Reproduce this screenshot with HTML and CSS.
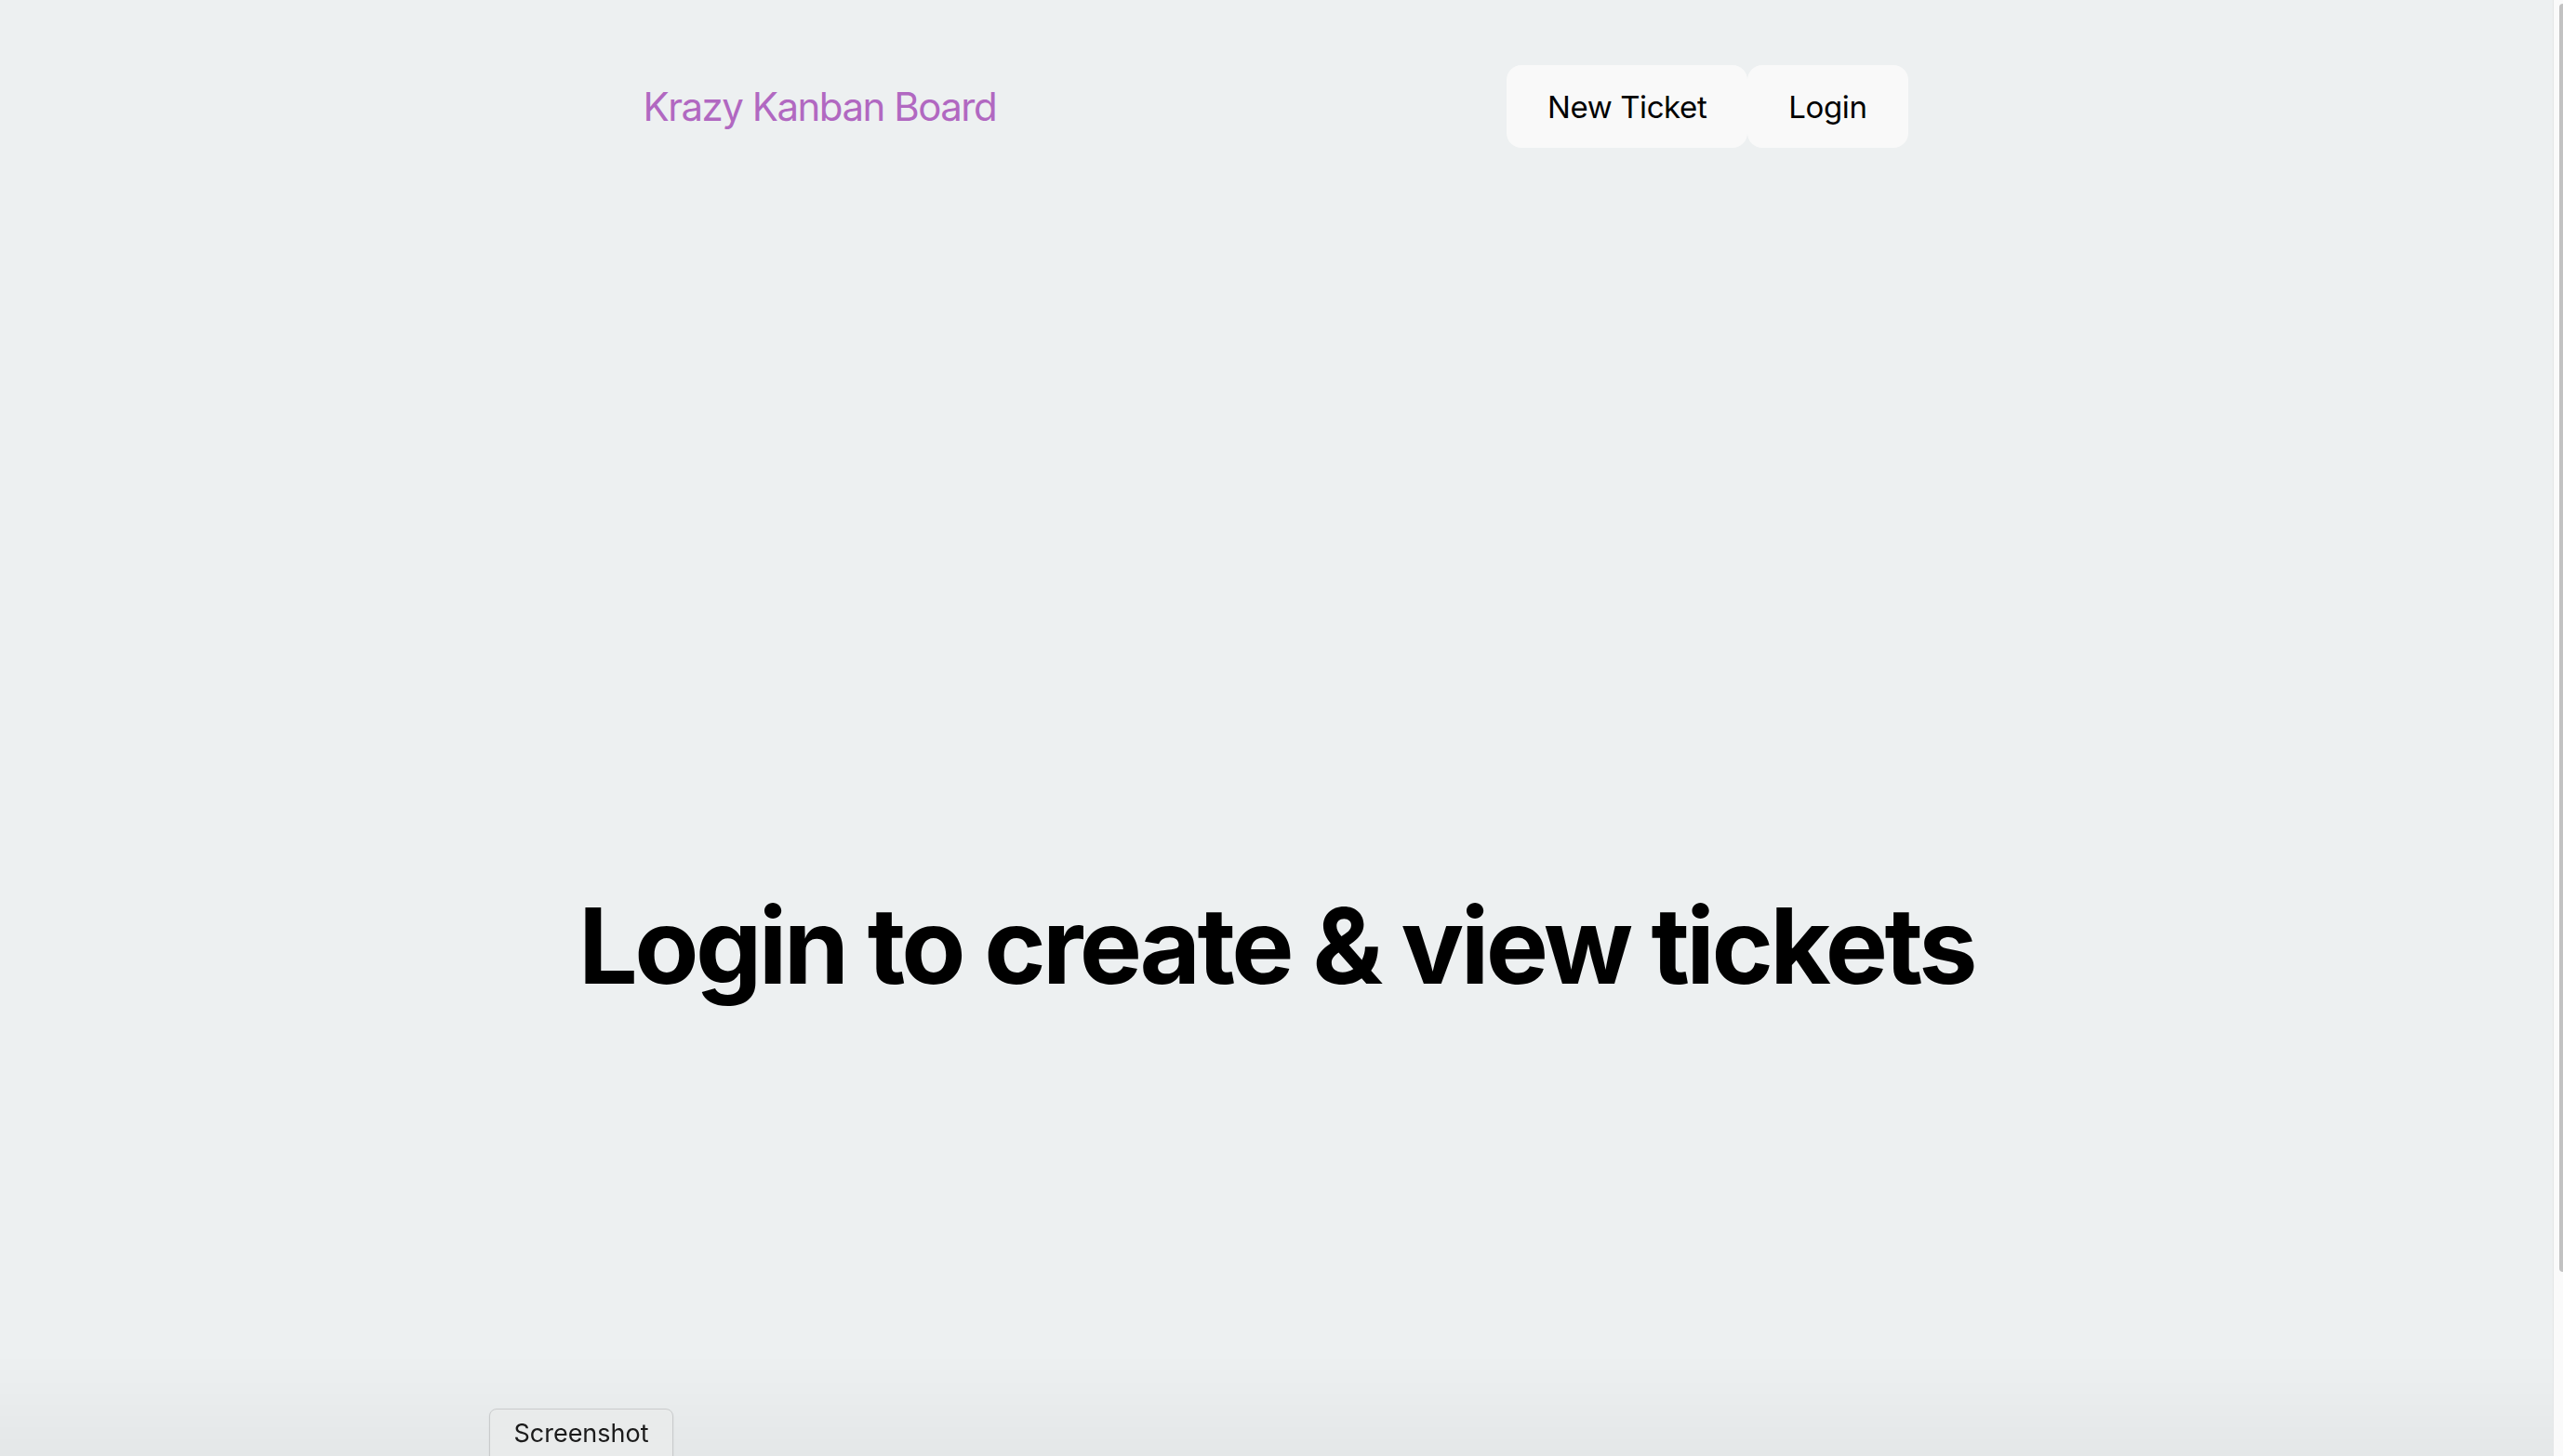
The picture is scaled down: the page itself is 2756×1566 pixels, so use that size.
FILE: index.html
```html
<!DOCTYPE html>
<html lang="en">
<head>
<meta charset="utf-8">
<title>Krazy Kanban Board</title>
<link rel="stylesheet" href="styles.css">
</head>
<body>
<div class="frame">
  <div class="page">
    <header class="nav">
      <h2 class="brand">Krazy Kanban Board</h2>
      <div class="actions">
        <button class="btn">New Ticket</button>
        <button class="btn">Login</button>
      </div>
    </header>
    <main class="main">
      <h1 class="headline">Login to create &amp; view tickets</h1>
    </main>
  </div>
  <div class="scrollbar"><div class="thumb"></div></div>
</div>
<div class="shade"></div>
<div class="shot-btn">Screenshot</div>
</body>
</html>
```

FILE: styles.css
```css
html, body {
  margin: 0;
  padding: 0;
  height: 1566px;
  overflow: hidden;
}
body {
  background: #edf0f1;
  font-family: Inter, "Noto Sans", "Liberation Sans", sans-serif;
  color: #000;
}
.frame {
  display: flex;
  height: 1566px;
}
.page {
  flex: 1;
  display: flex;
  flex-direction: column;
}
.nav {
  width: 1358px;
  margin: 70px auto 0;
  display: flex;
  justify-content: space-between;
  align-items: center;
}
.brand {
  margin: 0 0 0 -2px;
  font-size: 42px;
  font-weight: 400;
  color: #b168c1;
  letter-spacing: -1.5px;
}
.actions {
  display: flex;
}
.btn {
  height: 89px;
  padding: 0 44px;
  border: none;
  border-radius: 16px;
  background: #f9f9f9;
  font-family: inherit;
  font-size: 33px;
  font-weight: 400;
  color: #000;
  letter-spacing: -0.4px;
}
.main {
  padding-top: 796px;
  display: flex;
  justify-content: center;
}
.headline {
  margin: 0;
  font-size: 113px;
  line-height: 1.1;
  font-weight: 700;
  letter-spacing: -3.6px;
  text-align: center;
}
.scrollbar {
  width: 10px;
  border-left: 1px solid #e4e6e7;
  background: #fafafa;
  padding-top: 4px;
}
.thumb {
  margin-left: 6px;
  height: 1364px;
  background: #c2c2c2;
  border-radius: 5px 0 0 5px;
}
.shade {
  position: fixed;
  left: 0;
  right: 11px;
  bottom: 0;
  height: 110px;
  background: linear-gradient(to bottom, rgba(0,0,0,0), rgba(0,0,0,0.035));
  pointer-events: none;
}
.shot-btn {
  position: fixed;
  left: 526px;
  top: 1515px;
  width: 198px;
  height: 60px;
  box-sizing: border-box;
  border: 1px solid #c9cbcc;
  border-radius: 8px;
  background: #e9ebeb;
  box-shadow: 0 1px 2px rgba(0,0,0,0.08);
  font-family: Inter, "Noto Sans", sans-serif;
  font-size: 27px;
  color: #1b1b1b;
  text-align: center;
  padding-top: 9px;
}
```
